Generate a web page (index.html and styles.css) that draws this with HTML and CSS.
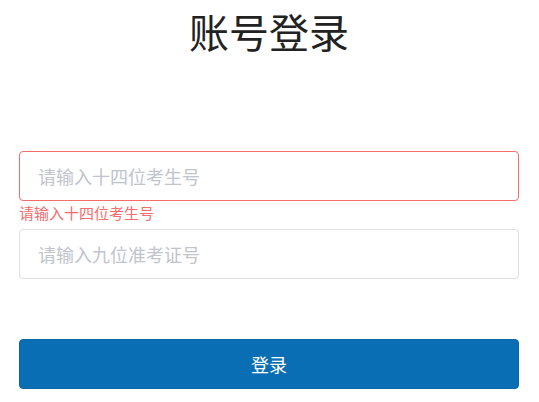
FILE: index.html
```html
<!DOCTYPE html>
<html lang="zh-CN">
<head>
<meta charset="utf-8">
<title>账号登录</title>
<link rel="stylesheet" href="styles.css">
</head>
<body>
<div class="page">
  <h1 class="title">账号登录</h1>
  <form class="form">
    <input class="input input-error" type="text" placeholder="请输入十四位考生号">
    <div class="error">请输入十四位考生号</div>
    <input class="input" type="text" placeholder="请输入九位准考证号">
    <button class="btn" type="button">登录</button>
  </form>
</div>
</body>
</html>
```

FILE: styles.css
```css
html, body {
  margin: 0;
  padding: 0;
  background: #ffffff;
}
body {
  font-family: "Noto Sans CJK SC", "Noto Sans", sans-serif;
  color: #222222;
}
.page {
  padding: 0 20px 0 19px;
}
.title {
  margin: 0;
  padding-top: 11px;
  font-size: 40px;
  line-height: 40px;
  font-weight: 400;
  text-align: center;
  color: #222222;
}
.form {
  display: flex;
  flex-direction: column;
  margin-top: 100px;
}
.input {
  box-sizing: border-box;
  width: 100%;
  height: 50px;
  margin: 0;
  padding: 0 18px;
  border: 1px solid #dcdfe6;
  border-radius: 4px;
  font-family: "Noto Sans CJK SC", sans-serif;
  font-size: 18px;
  color: #606266;
  outline: none;
  background: #fff;
}
.input::placeholder {
  color: #c0c4cc;
}
.input-error {
  border-color: #f56c6c;
}
.error {
  color: #f56c6c;
  font-size: 15px;
  line-height: 20px;
  padding-top: 2px;
  margin-bottom: 6px;
}
.btn {
  box-sizing: border-box;
  width: 100%;
  height: 50px;
  margin-top: 60px;
  border: 1px solid #0a66ab;
  border-radius: 4px;
  background: #096eb3;
  color: #ffffff;
  font-family: "Noto Sans CJK SC", sans-serif;
  font-size: 18px;
  cursor: pointer;
}
```
